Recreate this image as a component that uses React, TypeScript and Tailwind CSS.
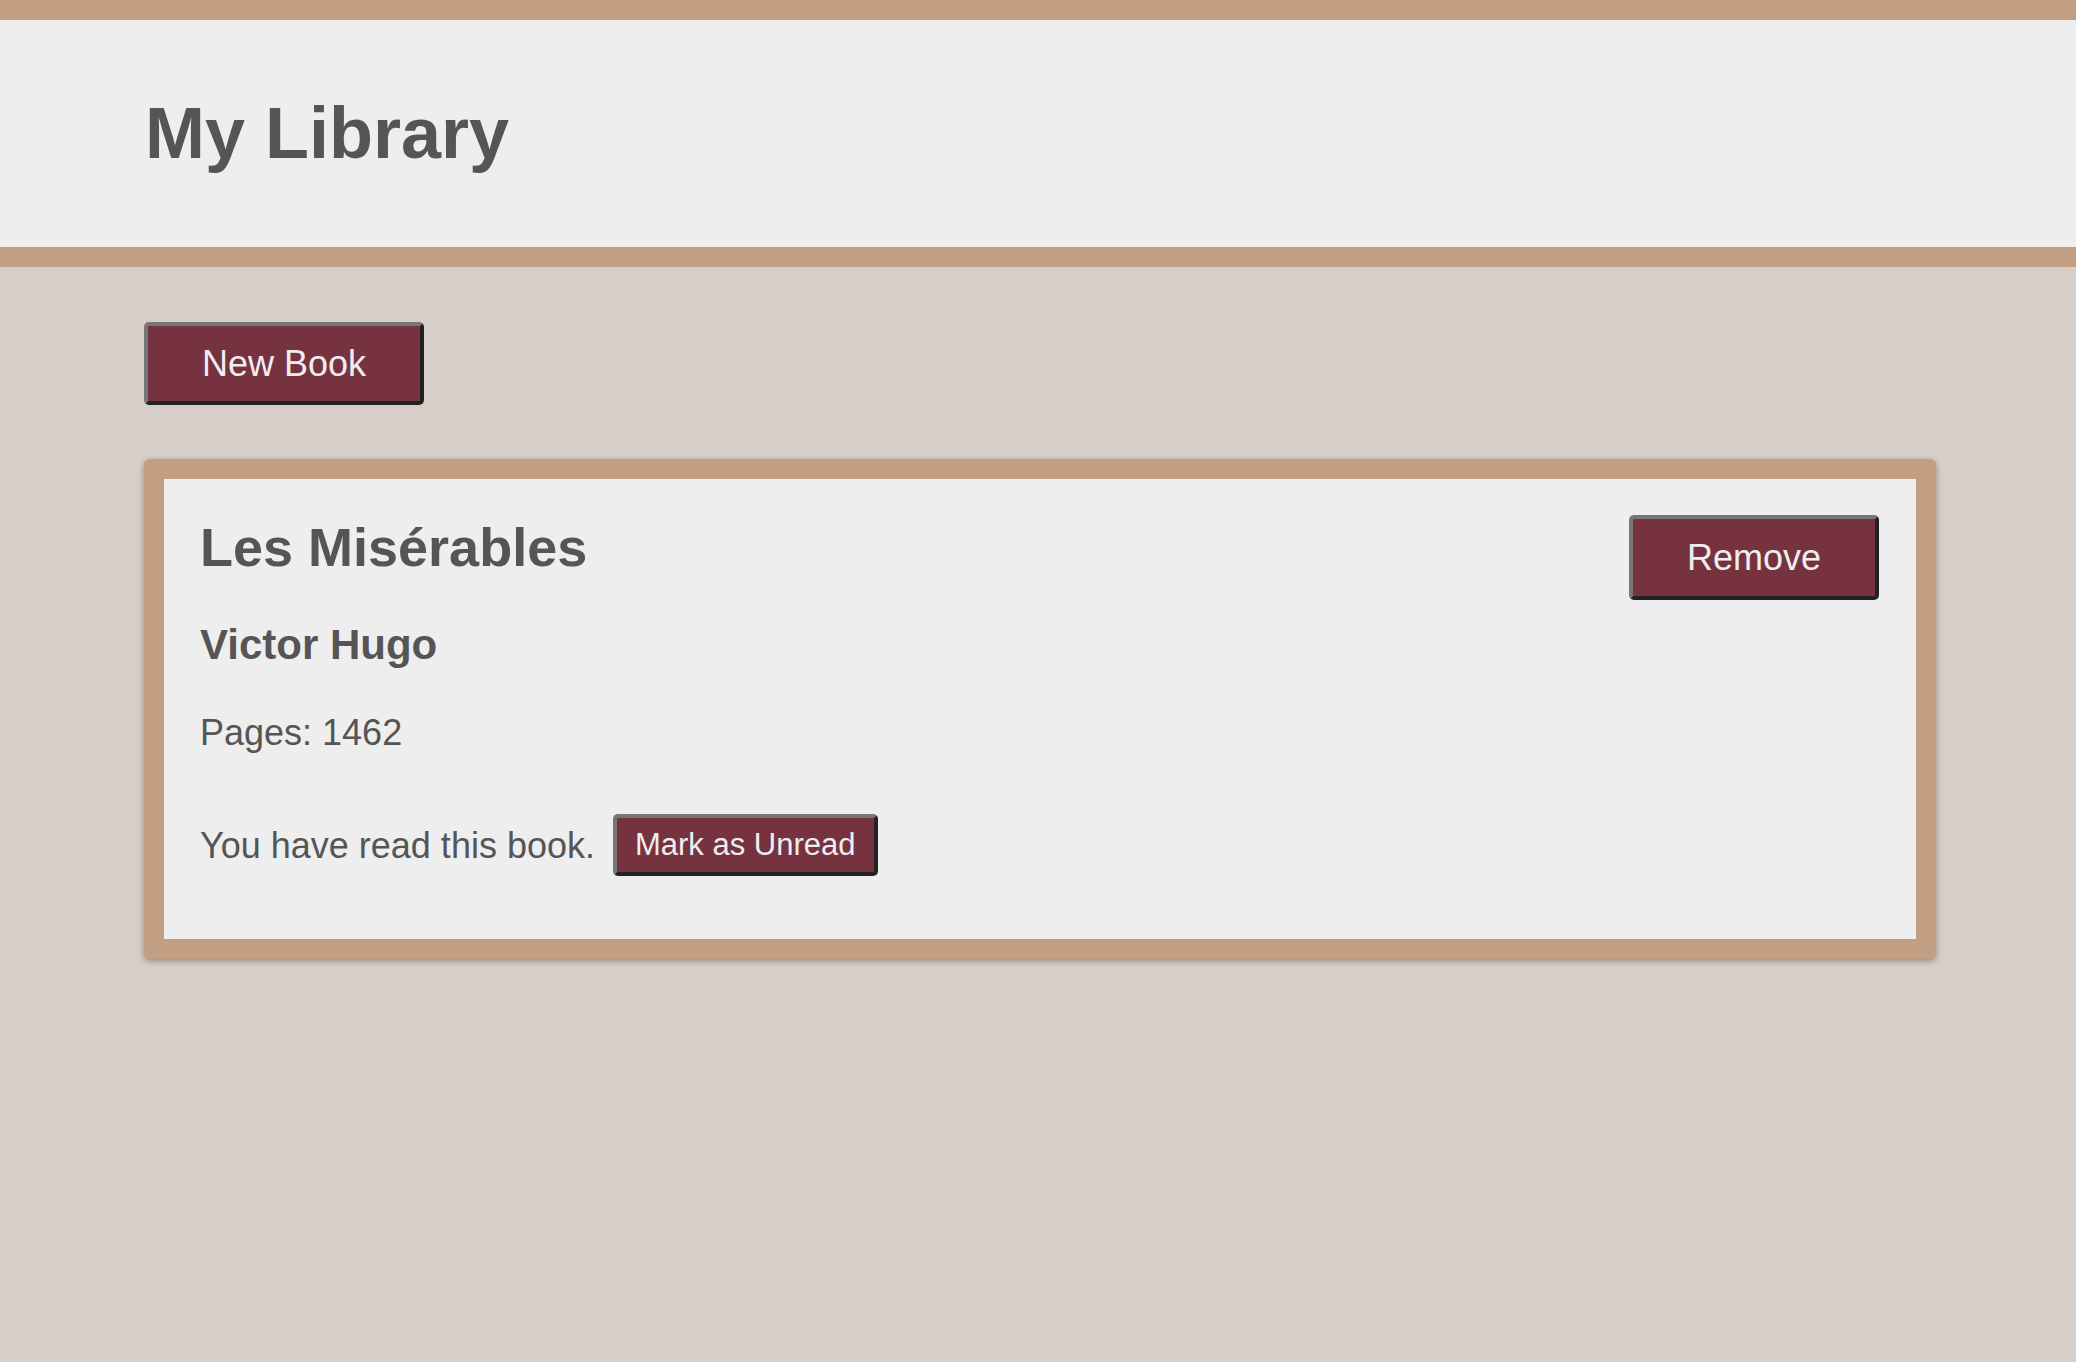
import React from "react";

const btn =
  "bg-[#773240] text-[#eeeeee] border-4 border-t-[#777777] border-l-[#777777] border-b-[#222222] border-r-[#222222] rounded-[5px] leading-[41px]";

export default function App() {
  return (
    <div
      className="min-h-screen bg-[#d8cec8] text-[#555555]"
      style={{ fontFamily: '"Liberation Sans", Arial, Helvetica, sans-serif' }}
    >
      <header className="bg-[#eeeeee] border-t-[20px] border-b-[20px] border-[#c29e82] h-[267px] flex items-center px-[145px]">
        <h1 className="text-[72px] font-bold leading-[83px]">My Library</h1>
      </header>
      <main className="pl-[144px] pr-[140px] pt-[55px]">
        <button className={`${btn} text-[36px] px-[54px] py-[17px]`}>New Book</button>
        <div className="mt-[54px] border-[20px] border-[#c29e82] rounded-[6px] bg-[#eeeeee] shadow-[0_2px_6px_rgba(0,0,0,0.35)]">
          <div className="pl-[36px] pr-[37px] pt-[36px] pb-[63px]">
            <div className="flex justify-between items-start">
              <div>
                <h2 className="text-[54px] font-bold leading-[62px] pt-[1px]">Les Misérables</h2>
                <h3 className="text-[42px] font-bold leading-[47px] mt-[43px]">Victor Hugo</h3>
                <p className="text-[36px] leading-[41px] mt-[44px]">Pages: 1462</p>
              </div>
              <button className={`${btn} text-[36px] px-[54px] py-[18px]`}>Remove</button>
            </div>
            <div className="flex items-center gap-[18px] mt-[61px]">
              <span className="text-[36px] leading-[41px]">You have read this book.</span>
              <button className="bg-[#773240] text-[#eeeeee] border-4 border-t-[#777777] border-l-[#777777] border-b-[#222222] border-r-[#222222] rounded-[5px] text-[31px] leading-[36px] px-[18px] py-[9px]">
                Mark as Unread
              </button>
            </div>
          </div>
        </div>
      </main>
    </div>
  );
}
